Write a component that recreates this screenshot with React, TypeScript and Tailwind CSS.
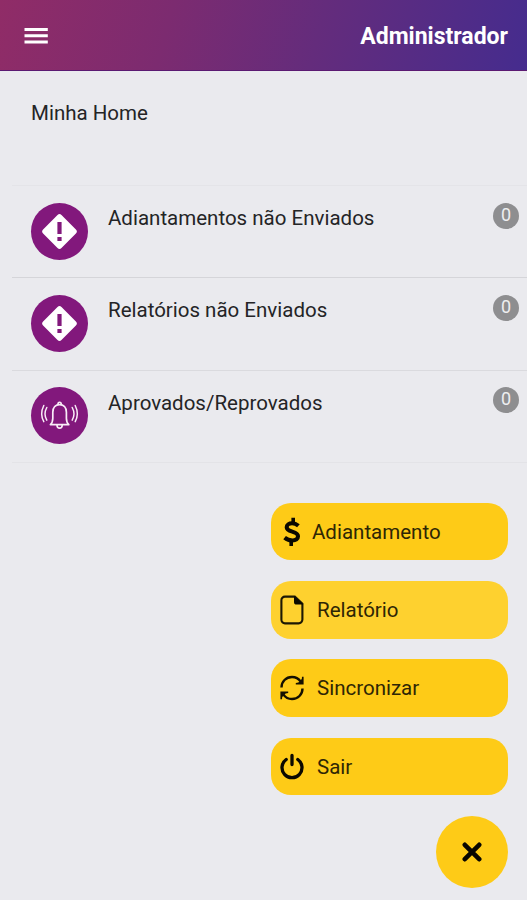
import type { ReactNode } from "react";

interface HomeItem {
    label: string;
    count: number;
    icon: ReactNode;
    line: string;
}

interface ActionButtonProps {
    label: string;
    icon: ReactNode;
    className: string;
    textClassName: string;
}

function MenuIcon() {
    return (
        <svg width="24" height="18" viewBox="0 0 24 18" fill="#fff">
            <path d="M0.5 1h23.3v3H0.5zM0.5 7.3h23.3v3H0.5zM0.5 13.6h23.3v3H0.5z" />
        </svg>
    );
}

function WarningIcon() {
    return (
        <svg width="57" height="57" viewBox="0 0 57 57">
            <rect x="15.5" y="15.5" width="26" height="26" rx="2.8" fill="#fff" transform="rotate(45 28.5 28.5)" />
            <path d="M26.4 19h4.2v12h-4.2zM26.4 34h4.2v4h-4.2z" fill="#82187c" />
        </svg>
    );
}

function BellIcon() {
    return (
        <svg width="57" height="57" viewBox="0 0 57 57" fill="none" stroke="#f9edf8" strokeWidth="1.7" strokeLinecap="round" strokeLinejoin="round">
            <path d="M19.4 37.6c2-1.8 2.4-3.4 2.4-6.400v-6c0-4.600 2.800-7.600 6.800-7.600s6.800 3 6.800 7.600v6c0 3 .4 4.600 2.400 6.400z" />
            <path d="M27 17.200c0-2.600 3.200-2.600 3.200 0M26 38.200c.2 4 5 4 5.200 0" />
            <path d="M15.800 20.500c-2.200 4-2.200 8.800 0 12.600M12.800 18.500c-2.500 5-2.500 11.600 0 16.200" strokeWidth="1.5" />
            <path d="M41.200 20.500c2.200 4 2.200 8.800 0 12.600M44.200 18.500c2.500 5 2.500 11.600 0 16.200" strokeWidth="1.5" />
        </svg>
    );
}

function DollarIcon() {
    return (
        <svg width="18" height="30" viewBox="0 0 18 30" fill="none" stroke="#0b0900" strokeWidth="4.100">
            <path d="M15.400 8.800C13.500 7.200 11.400 6.300 9 6.300c-3 0-5.300 1.400-5.300 3.900 0 5.400 11.300 3.500 11.300 9.100 0 2.700-2.300 4.200-5.500 4.200-2.900 0-5.600-1-7.900-2.900" />
            <path d="M10.200 0.800v5.700M8.200 23.500v5.600" strokeWidth="3.600" />
        </svg>
    );
}

function FileIcon() {
    return (
        <svg width="24" height="30" viewBox="0 0 24 30">
            <path d="M5 1.6h9.8l7.600 7.2v15.800a3.800 3.800 0 0 1-3.800 3.800H5a3.600 3.600 0 0 1-3.600-3.800V5.400A3.600 3.600 0 0 1 5 1.600z" fill="none" stroke="#1c1804" strokeWidth="2.1" />
            <path d="M14 1l9.400 8.600h-6.800a2.600 2.600 0 0 1-2.600-2.600z" fill="#0b0900" />
        </svg>
    );
}

function SyncIcon() {
    return (
        <svg width="24" height="26" viewBox="0 0 24 26" fill="none" stroke="#141000" strokeWidth="2.4">
            <path d="M1.500 12.500C1.500 6.500 6 2 12 2c3.600 0 6.600 1.600 8.500 4.400M22.500 13.500c0 6-4.500 10.500-10.500 10.500-3.600 0-6.600-1.600-8.500-4.400" />
            <path d="M23.600 1.800v7.800h-7.800v-1.600l2.600-.6 3.400-3.400.2-2.200zM.4 24.200v-7.800h7.800v1.600l-2.600.6-3.400 3.400-.2 2.200z" fill="#141000" stroke="none" />
        </svg>
    );
}

function PowerIcon() {
    return (
        <svg width="24" height="27" viewBox="0 0 24 27" fill="none" stroke="#0b0900" strokeWidth="3.3" strokeLinecap="round">
            <path d="M6.200 6.500a10 10 0 1 0 11.600 0M12 2.500v9" />
        </svg>
    );
}

const items: HomeItem[] = [
    { label: "Adiantamentos não Enviados", count: 0, icon: <WarningIcon />, line: "border-[#d5d5d9]" },
    { label: "Relatórios não Enviados", count: 0, icon: <WarningIcon />, line: "border-[#dadade]" },
    { label: "Aprovados/Reprovados", count: 0, icon: <BellIcon />, line: "border-[#e3e3e7]" },
];

function ActionButton({ label, icon, className, textClassName }: ActionButtonProps) {
    return (
        <button className={`flex h-[57.6px] w-[237px] items-center rounded-[20px] pl-[9px] ${className}`}>
            <span className="flex w-6 justify-center">{icon}</span>
            <span className={`text-[20.5px] leading-6 text-[#2e2605] ${textClassName}`}>{label}</span>
        </button>
    );
}

export default function App() {
    return (
        <div className="flex h-[900px] w-[527px] flex-col overflow-hidden bg-[#eaeaee] font-[Roboto,sans-serif] text-[#242426]">
            <header className="flex h-[71px] shrink-0 items-center justify-between border-b border-[#5b1a72] bg-[linear-gradient(105deg,#902c67_0%,#7c2b70_32%,#642c7c_60%,#452c8e_100%)] pt-px pr-[19px] pl-6">
                <button aria-label="Menu">
                    <MenuIcon />
                </button>
                <h1 className="pt-[3px] text-[23px] font-bold text-white">Administrador</h1>
            </header>

            <h2 className="h-[114.3px] shrink-0 pt-[30px] pl-[31px] text-[20.5px] leading-6">Minha Home</h2>

            <ul className="ml-3 border-t border-[#e4e4e8]">
                {items.map((item) => (
                    <li key={item.label} className={`flex h-[92.2px] border-b pt-[16.4px] pl-[19px] ${item.line}`}>
                        <span className="size-[57px] shrink-0 rounded-full bg-[#82187c]">{item.icon}</span>
                        <span className="ml-5 pt-[3.6px] text-[20.5px] leading-6">{item.label}</span>
                        <span className="mr-[8px] ml-auto flex size-[26px] items-center justify-center rounded-full bg-[#8e8e90] pb-0.5 text-[18px] leading-none text-[#eeeef0]">
                            {item.count}
                        </span>
                    </li>
                ))}
            </ul>

            {/* Floating actions */}
            <div className="mt-[40px] mr-[19px] flex flex-col items-end gap-[20.7px]">
                <ActionButton label="Adiantamento" icon={<DollarIcon />} className="bg-[#fecb17]" textClassName="ml-[8px]" />
                <ActionButton label="Relatório" icon={<FileIcon />} className="bg-[#fed12f]" textClassName="ml-[13px]" />
                <ActionButton label="Sincronizar" icon={<SyncIcon />} className="bg-[#fecb17]" textClassName="ml-[13px]" />
                <ActionButton label="Sair" icon={<PowerIcon />} className="bg-[#fecb17]" textClassName="ml-[13px]" />
                <button aria-label="Fechar" className="flex size-[72px] items-center justify-center rounded-full bg-[#fecb17]">
                    <svg width="20" height="20" viewBox="0 0 20 20" fill="none" stroke="#080600" strokeWidth="4.6" strokeLinecap="round">
                        <path d="M2.800 2.800l14.400 14.400M17.200 2.800L2.800 17.200" />
                    </svg>
                </button>
            </div>
        </div>
    );
}
